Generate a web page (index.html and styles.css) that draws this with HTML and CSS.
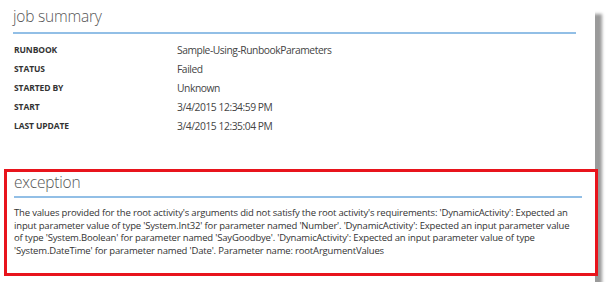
FILE: index.html
```html
<!DOCTYPE html>
<html>
<head>
<meta charset="utf-8">
<link rel="stylesheet" href="styles.css">
</head>
<body>
<div class="card">
  <section class="summary">
    <h2 class="head">job summary</h2>
    <div class="rows">
      <div class="row"><span class="label">RUNBOOK</span><span class="value">Sample-Using-RunbookParameters</span></div>
      <div class="row"><span class="label">STATUS</span><span class="value">Failed</span></div>
      <div class="row"><span class="label">STARTED BY</span><span class="value">Unknown</span></div>
      <div class="row"><span class="label">START</span><span class="value">3/4/2015 12:34:59 PM</span></div>
      <div class="row"><span class="label">LAST UPDATE</span><span class="value">3/4/2015 12:35:04 PM</span></div>
    </div>
  </section>
  <section class="exception">
    <h2 class="head">exception</h2>
    <p class="msg">The values provided for the root activity's arguments did not satisfy the root activity's requirements: 'DynamicActivity': Expected an<br>input parameter value of type 'System.Int32' for parameter named 'Number'. 'DynamicActivity': Expected an input parameter value<br>of type 'System.Boolean' for parameter named 'SayGoodbye'. 'DynamicActivity': Expected an input parameter value of type<br>'System.DateTime' for parameter named 'Date'. Parameter name: rootArgumentValues</p>
  </section>
</div>
</body>
</html>
```
FILE: styles.css
```css
html, body {
  margin: 0;
  padding: 0;
  background: #ffffff;
}
body {
  font-family: "Open Sans", "Noto Sans", sans-serif;
  color: #333;
}
.card {
  width: 595px;
  height: 282px;
  background: #fff;
  box-shadow: 10px 11px 3px -3px #9a9a9a;
  display: flex;
  flex-direction: column;
}
.head {
  margin: 0;
  font-weight: 300;
  font-size: 15.5px;
  line-height: 20px;
  letter-spacing: -0.2px;
  color: #555;
  border-bottom: 2px solid #92bfe6;
}
.summary {
  padding: 6px 19px 0 14px;
}
.summary .head {
  margin-left: -1px;
  padding-bottom: 6px;
}
.rows {
  margin-top: 6px;
  display: flex;
  flex-direction: column;
}
.row {
  display: flex;
  height: 19px;
  align-items: center;
}
.label {
  width: 163px;
  flex: none;
  font-size: 8.5px;
  font-weight: 700;
  letter-spacing: -0.1px;
  color: #333;
}
.value {
  font-size: 10.3px;
  letter-spacing: -0.45px;
  color: #444;
}
.exception {
  margin: 34px 0 0 4px;
  width: 568px;
  height: 101px;
  border: 3px solid #e8141c;
  padding: 0 13px 0 7px;
}
.exception .head {
  padding-bottom: 4px;
  border-bottom-width: 2px;
}
.msg {
  margin: 9px 0 0;
  font-size: 9.5px;
  line-height: 12.7px;
  letter-spacing: -0.17px;
  color: #333;
  white-space: nowrap;
}
```
